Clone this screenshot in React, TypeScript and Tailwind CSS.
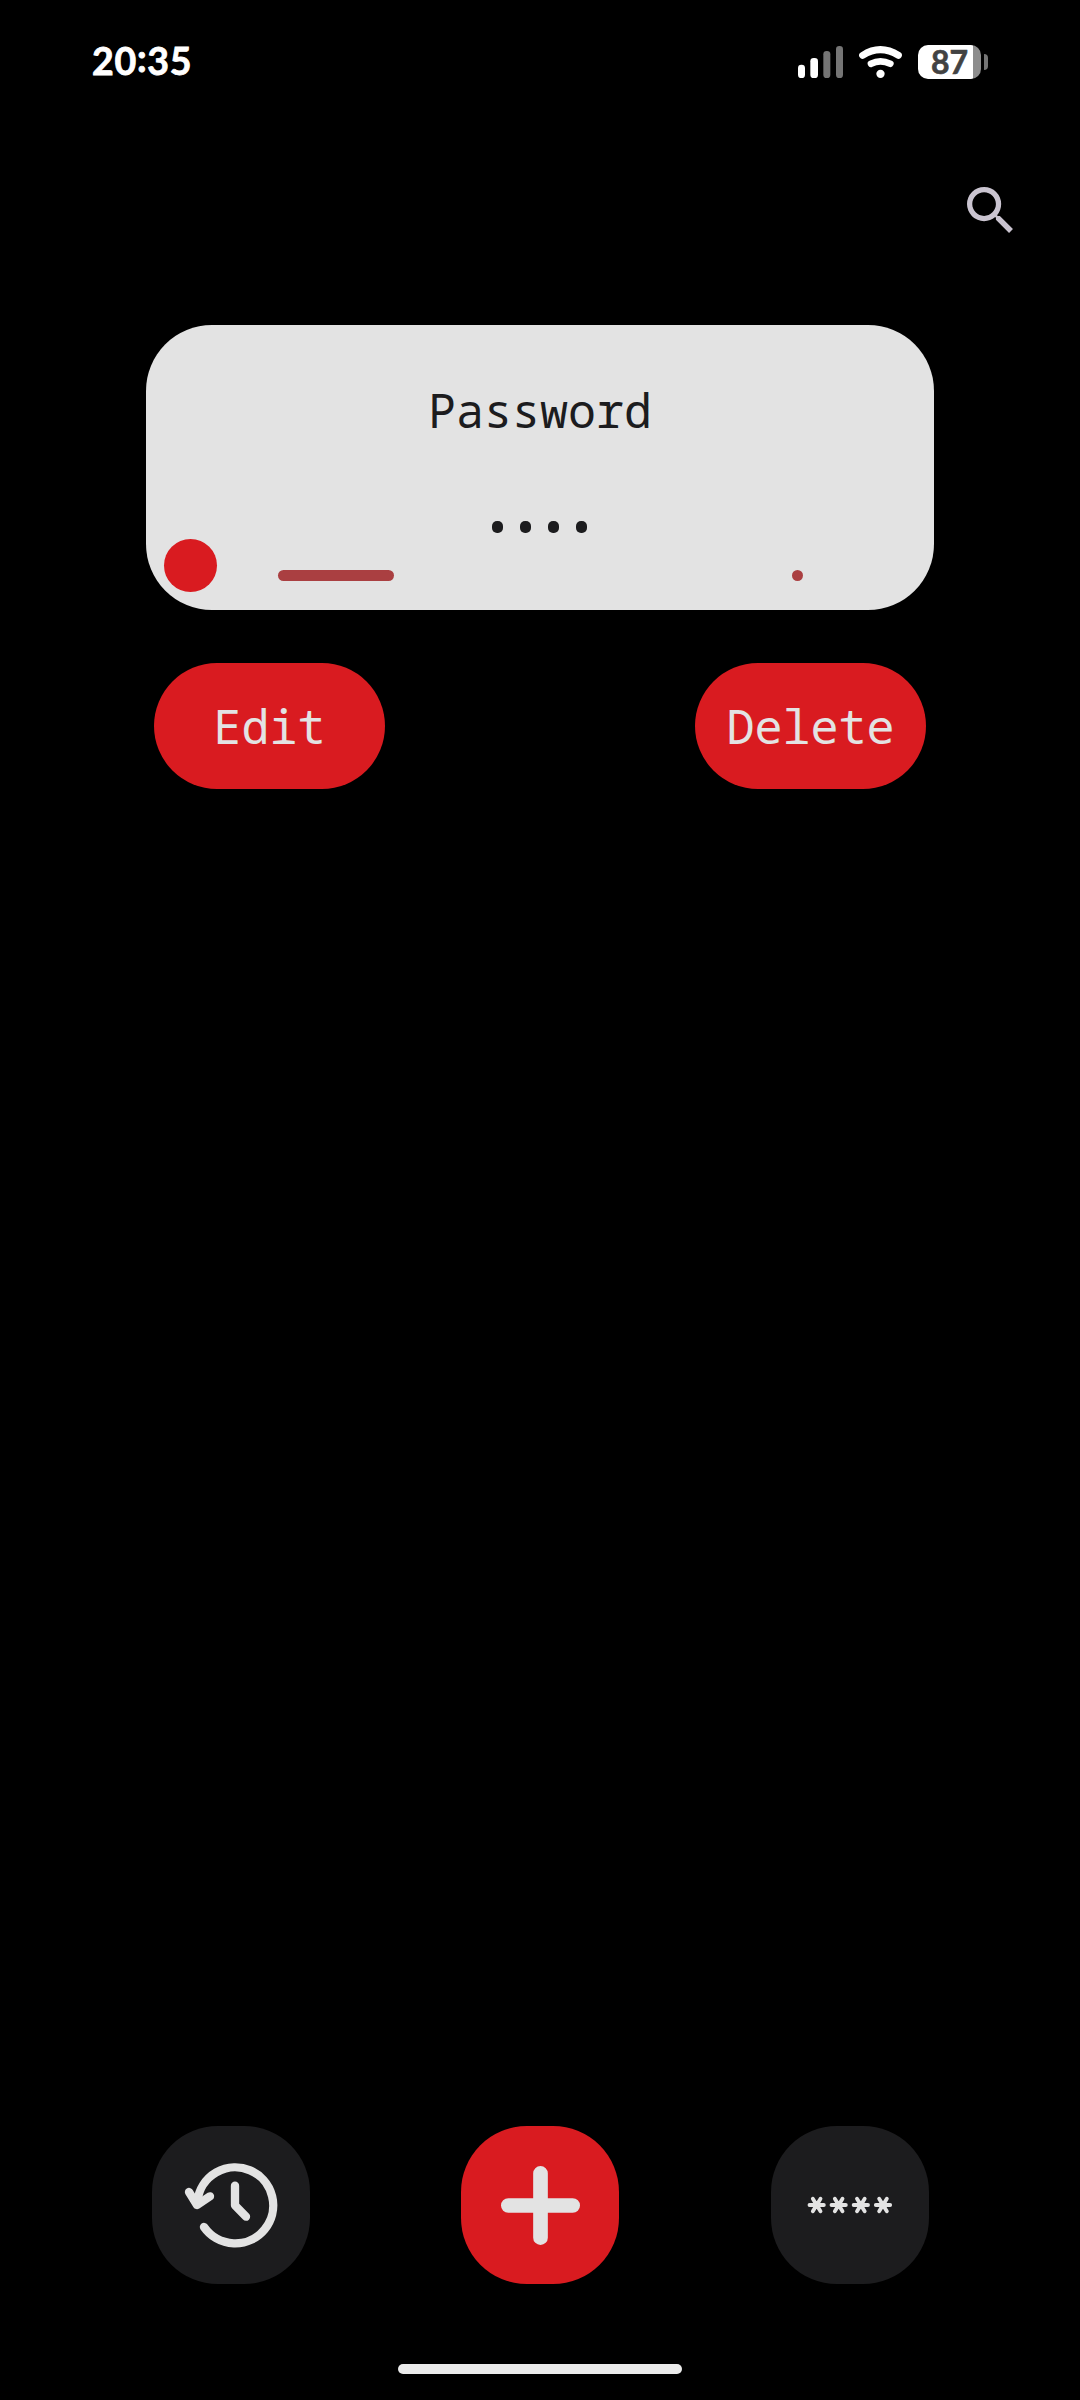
import React from "react";

const mono = "font-['Noto_Sans_Mono','DejaVu_Sans_Mono',monospace] text-[46.67px] leading-[56px]";

function StatusBar() {
  return (
    <header className="flex h-[124px] w-full items-start justify-between pl-[92px] pr-[92px] text-white">
      <span className="mt-[38px] font-['Lato',sans-serif] text-[37.5px] font-bold leading-[45px] tracking-[0.7px] [-webkit-text-stroke:0.8px_#fff]">
        20<span className="relative -top-[3px]">:</span>35
      </span>
      <div className="mt-[45px] flex items-start">
        <svg className="h-[34px] w-[45px]" viewBox="54 45 135 102" fill="#fff">
          <rect x="54" y="104" width="21" height="40" rx="10" />
          <rect x="91" y="84" width="23" height="60" rx="10" />
          <rect x="130" y="63" width="21" height="81" rx="10" fill="#757575" />
          <rect x="168" y="48" width="21" height="96" rx="10" fill="#757575" />
        </svg>
        <svg className="ml-4 h-[34px] w-[43px]" viewBox="237 45 129 102" fill="none" stroke="#fff" strokeLinecap="round">
          <path d="M248 76Q301 42 355 76" strokeWidth="21" />
          <path d="M273 101Q301 87 331 101" strokeWidth="20" />
          <circle cx="301.500" cy="131.500" r="12.500" fill="#fff" stroke="none" />
        </svg>
        <div className="ml-4 flex items-center">
          <div className="flex h-[34px] w-[63px] items-center rounded-[10px] bg-[linear-gradient(to_right,#fff_55px,#8d8d8d_55px)]">
            <span className="ml-[13px] font-['Lato',sans-serif] text-[32px] font-bold leading-[34px] text-[#424242] [-webkit-text-stroke:0.6px_#424242]">87</span>
          </div>
          <div className="ml-[3px] h-4 w-1 rounded-r-[4px] bg-[#757575]" />
        </div>
      </div>
    </header>
  );
}

function SearchIcon() {
  return (
    <svg className="h-[46px] w-[46px]" viewBox="3 3 17.500 17.500" fill="#cac4d0">
      <path d="M15.500 14h-.79l-.28-.27A6.471 6.471 0 0 0 16 9.500 6.500 6.500 0 1 0 9.500 16c1.610 0 3.090-.59 4.230-1.570l.27.28v.79l5 4.990L20.490 19l-4.990-5zm-6 0C7.010 14 5 11.990 5 9.500S7.010 5 9.500 5 14 7.010 14 9.500 11.990 14 9.500 14z" />
    </svg>
  );
}

function PasswordCard() {
  return (
    <section className="mt-[92px] flex h-[285px] w-[788px] flex-col items-center rounded-[66px] bg-[#e3e3e3] pt-[57px] text-[#1c1c1e]">
      <h1 className={mono}>Password</h1>
      <div className="mr-[2px] mt-[83px] flex gap-[17px]">
        {[0, 1, 2, 3].map((i) => (
          <span key={i} className="h-3 w-[11px] rounded-[5px] bg-[#1c1c1e]" />
        ))}
      </div>
      <div className="mt-[6px] flex h-[53px] w-full items-start pl-[18px]">
        <div className="h-[53px] w-[53px] rounded-full bg-[#d91b20]" />
        <div className="ml-[61px] mt-[31px] h-[11px] w-[116px] rounded-full bg-[#aa3f41]" />
        <div className="ml-[398px] mt-[31px] h-[11px] w-[11px] rounded-full bg-[#aa3f41]" />
      </div>
    </section>
  );
}

function PillButton({ label }: { label: string }) {
  return (
    <button className="flex h-[126px] w-[231px] justify-center rounded-[63px] bg-[#d91b20] pt-[35px] text-[#e3e3e3]">
      <span className={mono}>{label}</span>
    </button>
  );
}

function BottomNav() {
  return (
    <nav className="flex w-[777px] justify-between">
      <button className="h-[158px] w-[158px] rounded-[66px] bg-[#1c1c1e]" aria-label="History">
        <svg className="h-full w-full" viewBox="36 48 474 474" fill="none" stroke="#e3e3e3" strokeWidth="25" strokeLinecap="round" strokeLinejoin="round">
          <path d="M172.500 272A114 114 0 1 1 192 351" />
          <path d="M147 246L171 285L210 259" />
          <path d="M285 227V286L318 320" />
        </svg>
      </button>
      <button className="h-[158px] w-[158px] rounded-[66px] bg-[#d91b20]" aria-label="Add">
        <svg className="h-full w-full" viewBox="33 48 474 474" stroke="#e3e3e3" strokeWidth="44" strokeLinecap="round">
          <path d="M271.500 190V383M175 286.500H368" />
        </svg>
      </button>
      <button className="h-[158px] w-[158px] rounded-[66px] bg-[#1c1c1e]" aria-label="Passwords">
        <svg className="h-full w-full" viewBox="33 48 474 474" fill="#e3e3e3" stroke="#e3e3e3" strokeWidth="11.500" strokeLinecap="round">
          {[170, 236, 302.5, 369].map((x) => (
            <g key={x} transform={`translate(${x} 285)`}>
              <path d="M-21.500 0H21.500M-11.500 -19L11.500 19M11.500 -19L-11.500 19" />
              <circle r="12" stroke="none" />
            </g>
          ))}
        </svg>
      </button>
    </nav>
  );
}

export default function App() {
  return (
    <main className="flex h-[2400px] w-[1080px] flex-col items-center overflow-hidden bg-black">
      <StatusBar />
      <div className="flex w-full justify-end pr-[67px] pt-[63px]">
        <button aria-label="Search">
          <SearchIcon />
        </button>
      </div>
      <PasswordCard />
      <div className="mt-[53px] flex w-[772px] justify-between">
        <PillButton label="Edit" />
        <PillButton label="Delete" />
      </div>
      <div className="grow" />
      <BottomNav />
      <div className="mb-[26px] mt-20 h-[10px] w-[284px] shrink-0 rounded-full bg-[#ebebeb]" />
    </main>
  );
}
